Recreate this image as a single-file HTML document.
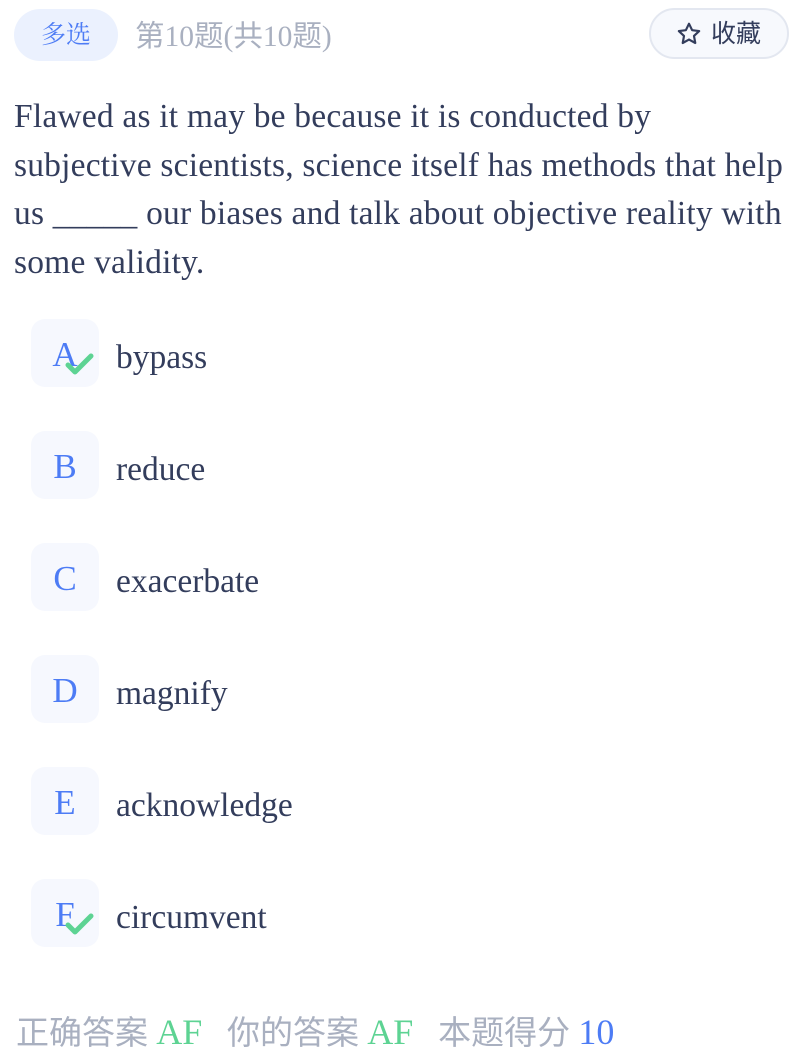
<!DOCTYPE html>
<html><head><meta charset="utf-8"><style>
*{margin:0;padding:0;box-sizing:border-box}
body{width:812px;height:1058px;background:#fff;font-family:"Liberation Serif","Noto Serif CJK SC",serif;color:#333d5c;position:relative;overflow:hidden}
.tag{position:absolute;left:14px;top:9px;width:104px;height:52px;border-radius:26px;background:#ebf1fe;color:#4d7cf5;font-family:"Liberation Sans","Noto Serif CJK SC",serif;font-size:25px;line-height:52px;text-align:center}
.title{position:absolute;left:135px;top:19px;font-size:29.5px;color:#a9b0c0;line-height:36px;font-family:"Liberation Serif","Noto Sans CJK SC",serif}
.fav{position:absolute;left:649px;top:8px;width:140px;height:51px;border:2px solid #e3e7f0;border-radius:26px;background:#f7f9fd;font-family:"Liberation Sans","Noto Sans CJK SC",sans-serif;font-size:25px;color:#333d5c;line-height:49px;padding-left:60px}
.fav svg{position:absolute;left:25px;top:11px}
.q{position:absolute;left:14px;top:93px;width:798px;font-size:33.5px;line-height:48.5px;color:#333d5c;white-space:nowrap;letter-spacing:0.2px}
.opt{position:absolute;left:31px;width:68px;height:68px;border-radius:14px;background:#f6f8fe;color:#4d7cf5;font-size:35px;text-align:center;line-height:72px}
.opt svg{position:absolute;left:34px;top:34px}
.ot{position:absolute;left:116px;font-size:33.5px;line-height:40px;color:#333d5c}
.foot{position:absolute;left:16px;top:1010px;font-size:33px;line-height:44px;color:#a9b0c0;font-family:"Liberation Serif","Noto Sans CJK SC",serif;white-space:pre}
.g{color:#5dd393;font-family:"Liberation Serif",serif;font-size:36px}.b{color:#4d7cf5;font-family:"Liberation Serif",serif;font-size:36px}
</style></head><body>
<div class="tag">多选</div>
<div class="title">第10题(共10题)</div>
<div class="fav"><svg width="26" height="26" viewBox="0 0 24 24"><path d="M12 2.5l2.9 6 6.5.8-4.8 4.5 1.2 6.5L12 17.1 6.2 20.3l1.2-6.5L2.6 9.3l6.5-.8z" fill="none" stroke="#333d5c" stroke-width="2" stroke-linejoin="round"/></svg>收藏</div>
<div class="q">Flawed as it may be because it is conducted by<br>subjective scientists, science itself has methods that help<br>us _____ our biases and talk about objective reality with<br>some validity.</div>

<div class="opt" style="top:319px">A<svg width="30" height="24" viewBox="0 0 30 24"><path d="M3 12l7 7L26 3" fill="none" stroke="#5dd393" stroke-width="5" stroke-linecap="round" stroke-linejoin="round"/></svg></div><div class="ot" style="top:338px">bypass</div>
<div class="opt" style="top:431px">B</div><div class="ot" style="top:450px">reduce</div>
<div class="opt" style="top:543px">C</div><div class="ot" style="top:562px">exacerbate</div>
<div class="opt" style="top:655px">D</div><div class="ot" style="top:674px">magnify</div>
<div class="opt" style="top:767px">E</div><div class="ot" style="top:786px">acknowledge</div>
<div class="opt" style="top:879px">F<svg width="30" height="24" viewBox="0 0 30 24"><path d="M3 12l7 7L26 3" fill="none" stroke="#5dd393" stroke-width="5" stroke-linecap="round" stroke-linejoin="round"/></svg></div><div class="ot" style="top:898px">circumvent</div>

<div class="foot">正确答案 <span class="g">AF</span>   你的答案 <span class="g">AF</span>   本题得分 <span class="b">10</span></div>
</body></html>
